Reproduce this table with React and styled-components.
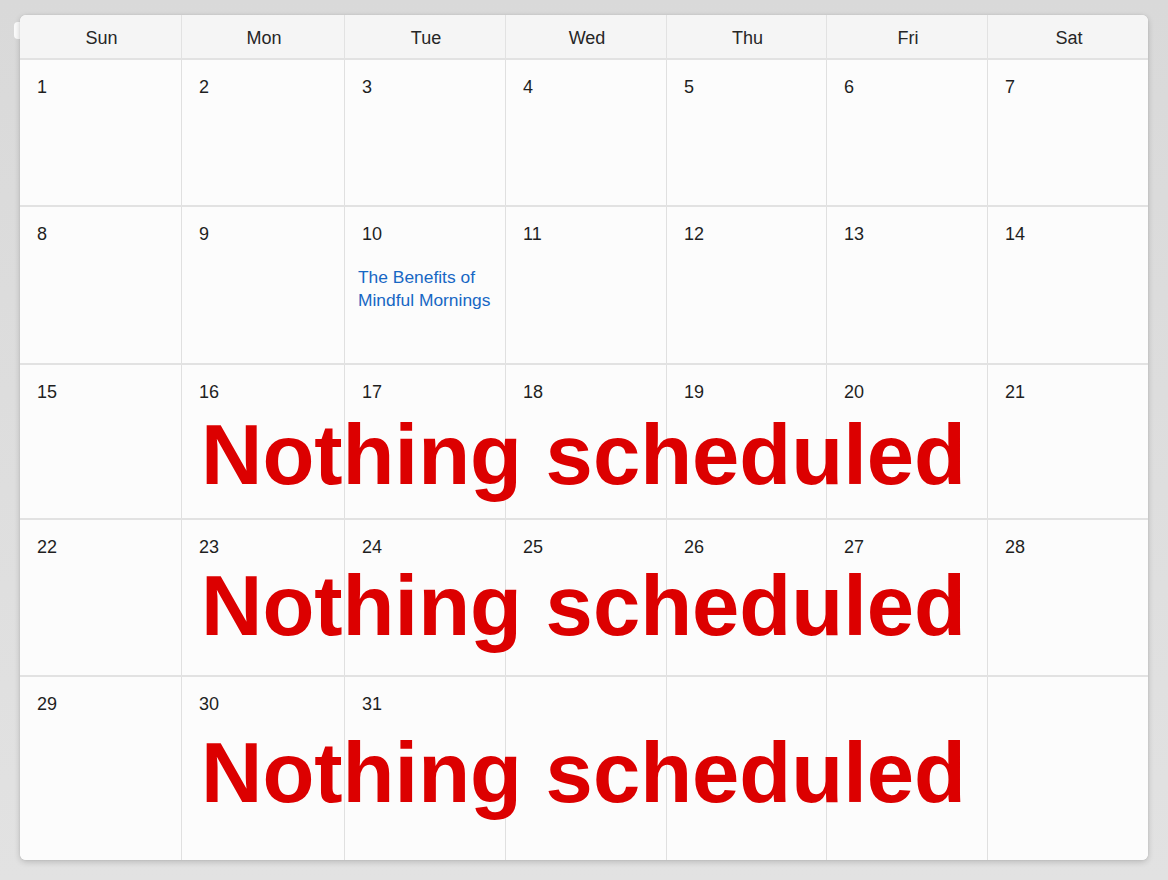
import React from "react";
import styled, { createGlobalStyle } from "styled-components";

const GlobalStyle = createGlobalStyle`
  html, body {
    margin: 0;
    padding: 0;
    background: #dcdcdc;
    font-family: "Liberation Sans", Arial, Helvetica, sans-serif;
  }
  * { box-sizing: border-box; }
`;

const COLS = "162px 163px 161px 161px 160px 161px 160px";

const Page = styled.div`
  width: 1168px;
  height: 880px;
  padding: 15px 20px 20px 20px;
  background: linear-gradient(#d9d9d9, #e2e2e2);
`;

const CardWrap = styled.div`
  position: relative;
`;

const Tab = styled.div`
  position: absolute;
  left: -6px;
  top: 7px;
  width: 12px;
  height: 17px;
  border-radius: 4px;
  background: #fbfbfb;
`;

const Card = styled.div`
  position: relative;
  width: 1128px;
  height: 845px;
  background: #fcfcfc;
  border-radius: 6px;
  overflow: hidden;
  box-shadow: 0 2px 6px rgba(0, 0, 0, 0.18), 0 0 2px rgba(0, 0, 0, 0.08);
  display: flex;
  flex-direction: column;
`;

const HeaderRow = styled.div`
  display: grid;
  grid-template-columns: ${COLS};
  height: 45px;
  background: #f5f5f5;
  border-bottom: 2px solid #e2e2e2;
`;

const HeaderCell = styled.div`
  display: flex;
  align-items: center;
  justify-content: center;
  padding-top: 3px;
  padding-left: 2px;
  font-size: 18px;
  color: #262626;
  border-right: ${(p) => (p.$last ? "none" : "1px solid #e2e2e2")};
`;

const WeekRow = styled.div`
  position: relative;
  display: grid;
  grid-template-columns: ${COLS};
  height: ${(p) => p.$h}px;
  flex: ${(p) => (p.$fill ? "1" : "none")};
  border-bottom: ${(p) => (p.$last ? "none" : "2px solid #e2e2e2")};
`;

const DayCell = styled.div`
  display: flex;
  flex-direction: column;
  padding: 17px 16px 0 17px;
  border-right: ${(p) => (p.$last ? "none" : "1px solid #e0e0e0")};
  background: #fcfcfc;
`;

const DateNum = styled.div`
  font-size: 18px;
  color: #1f1f1f;
  line-height: 21px;
`;

const EventLink = styled.a`
  margin-top: 21px;
  margin-left: -4px;
  font-size: 17.4px;
  line-height: 23px;
  color: #1767c4;
  text-decoration: none;
  white-space: nowrap;
`;

const EmptyOverlay = styled.div`
  position: absolute;
  left: 181px;
  top: ${(p) => p.$top}px;
  font-size: 85px;
  font-weight: 700;
  line-height: 86px;
  color: #dc0000;
  white-space: nowrap;
  pointer-events: none;
`;

const DAYS = ["Sun", "Mon", "Tue", "Wed", "Thu", "Fri", "Sat"];

const weeks = [
  { h: 147, days: [1, 2, 3, 4, 5, 6, 7] },
  { h: 158, days: [8, 9, 10, 11, 12, 13, 14], events: { 10: "The Benefits of Mindful Mornings" } },
  { h: 155, days: [15, 16, 17, 18, 19, 20, 21], empty: 47 },
  { h: 157, days: [22, 23, 24, 25, 26, 27, 28], empty: 43 },
  { h: 183, days: [29, 30, 31, null, null, null, null], empty: 53, last: true },
];

export default function App() {
  return (
    <Page>
      <GlobalStyle />
      <CardWrap>
        <Tab />
        <Card>
          <HeaderRow>
            {DAYS.map((d, i) => (
              <HeaderCell key={d} $last={i === 6}>
                {d}
              </HeaderCell>
            ))}
          </HeaderRow>
          {weeks.map((w, wi) => (
            <WeekRow key={wi} $h={w.h} $last={w.last} $fill={w.last}>
              {w.days.map((d, di) => (
                <DayCell key={di} $last={di === 6}>
                  {d !== null && <DateNum>{d}</DateNum>}
                  {w.events && w.events[d] && (
                    <EventLink href="#">
                      The Benefits of
                      <br />
                      Mindful Mornings
                    </EventLink>
                  )}
                </DayCell>
              ))}
              {w.empty !== undefined && (
                <EmptyOverlay $top={w.empty}>Nothing scheduled</EmptyOverlay>
              )}
            </WeekRow>
          ))}
        </Card>
      </CardWrap>
    </Page>
  );
}
